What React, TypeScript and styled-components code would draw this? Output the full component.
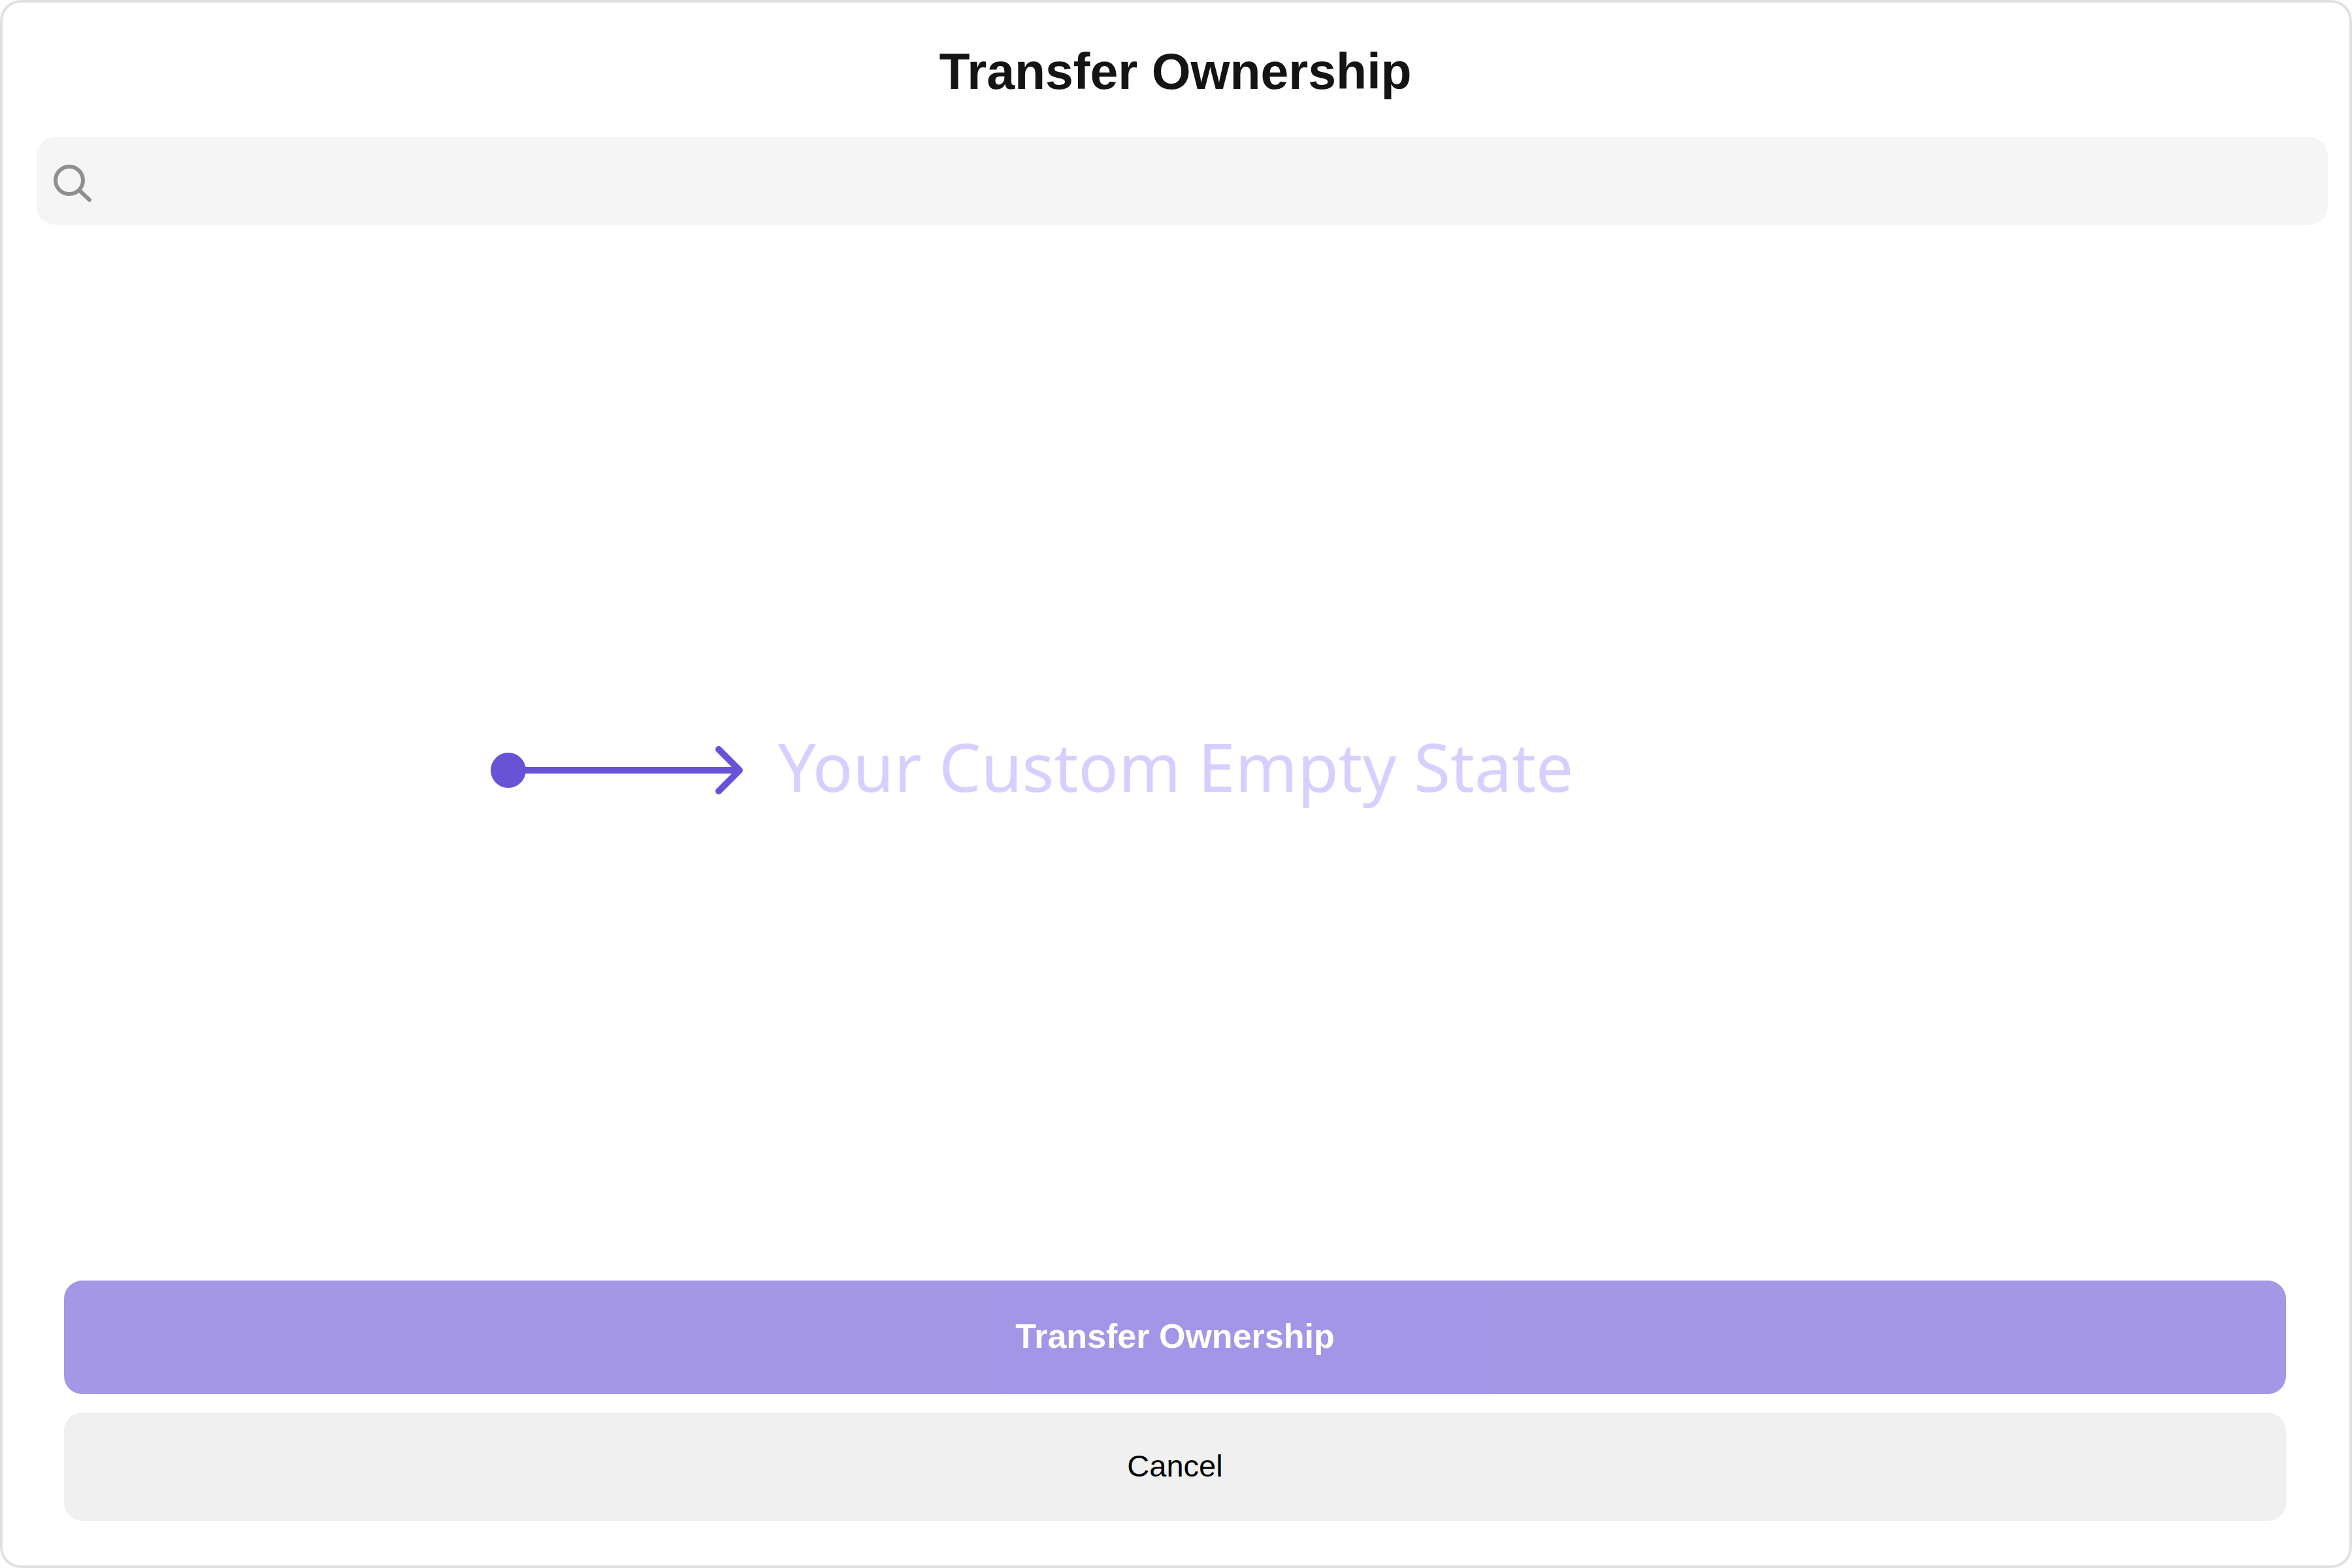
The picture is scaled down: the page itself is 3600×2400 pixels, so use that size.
import React from "react";
import styled, { createGlobalStyle } from "styled-components";

const GlobalStyle = createGlobalStyle`
  *, *::before, *::after { box-sizing: border-box; }
  body {
    margin: 0;
    background: #ffffff;
    font-family: "Liberation Sans", Arial, sans-serif;
  }
`;

const Panel = styled.main`
  display: flex;
  flex-direction: column;
  min-height: 100vh;
  border: 4px solid #e0e0e0;
  border-radius: 32px;
  background: #ffffff;
`;

const Title = styled.h1`
  margin: 0;
  padding: 60px 54px 56px 52px;
  color: #141414;
  font-size: 77px;
  line-height: 90px;
  font-weight: 700;
  text-align: center;
`;

const SearchBar = styled.label`
  display: flex;
  align-items: center;
  gap: 28px;
  height: 134px;
  margin: 0 33px 0 52px;
  padding: 0 24px;
  border-radius: 28px;
  background: #f5f5f5;
`;

const SearchIcon = styled.svg`
  flex: none;
  width: 64px;
  height: 64px;
`;

const SearchInput = styled.input`
  flex: 1;
  min-width: 0;
  height: 100%;
  padding: 0;
  border: 0;
  outline: 0;
  background: transparent;
  color: #141414;
  font-family: inherit;
  font-size: 47px;
`;

const EmptyArea = styled.section`
  display: flex;
  flex: 1;
  align-items: center;
  justify-content: center;
  padding-top: 54px;
`;

const EmptyState = styled.div`
  display: flex;
  align-items: center;
  gap: 52px;
  width: 100%;
  max-width: 2098px;
`;

const Arrow = styled.svg`
  flex: none;
  width: 388px;
  height: 76px;
`;

const EmptyText = styled.p`
  margin: 0;
  padding-bottom: 12px;
  color: #d7cfff;
  font-family: "Noto Sans", sans-serif;
  font-size: 102px;
  line-height: 140px;
  white-space: nowrap;
`;

const Actions = styled.footer`
  display: flex;
  flex-direction: column;
  gap: 28px;
  padding: 0 97px 68px 94px;
`;

const Button = styled.button`
  width: 100%;
  padding: 0 0 4px;
  border: 0;
  border-radius: 28px;
  font-family: inherit;
  cursor: pointer;
`;

const PrimaryButton = styled(Button)`
  height: 174px;
  background: #6852d6;
  color: #ffffff;
  font-size: 52px;
  font-weight: 700;

  &:disabled {
    opacity: 0.6;
    cursor: not-allowed;
  }
`;

const SecondaryButton = styled(Button)`
  height: 166px;
  background: #f0f0f0;
  color: #000000;
  font-size: 47px;
`;

export default function App() {
  return (
    <>
      <GlobalStyle />
      <Panel>
        <Title>Transfer Ownership</Title>
        <SearchBar>
          <SearchIcon viewBox="0 0 64 64" fill="none" stroke="#8f8f8f" strokeWidth="6" aria-hidden="true">
            <circle cx="26" cy="31" r="21" />
            <path d="M41 46 L57 61" strokeLinecap="round" />
          </SearchIcon>
          <SearchInput type="text" aria-label="Search members" />
        </SearchBar>
        <EmptyArea>
          <EmptyState>
            <Arrow viewBox="0 0 388 76" fill="none" stroke="#6852d6" strokeWidth="10" aria-hidden="true">
              <circle cx="27" cy="38" r="27" fill="#6852d6" stroke="none" />
              <path d="M27 38 H380" />
              <path d="M349 6 L381 38 L349 70" strokeLinecap="round" strokeLinejoin="round" />
            </Arrow>
            <EmptyText>Your Custom Empty State</EmptyText>
          </EmptyState>
        </EmptyArea>
        <Actions>
          <PrimaryButton type="button" disabled>Transfer Ownership</PrimaryButton>
          <SecondaryButton type="button">Cancel</SecondaryButton>
        </Actions>
      </Panel>
    </>
  );
}
